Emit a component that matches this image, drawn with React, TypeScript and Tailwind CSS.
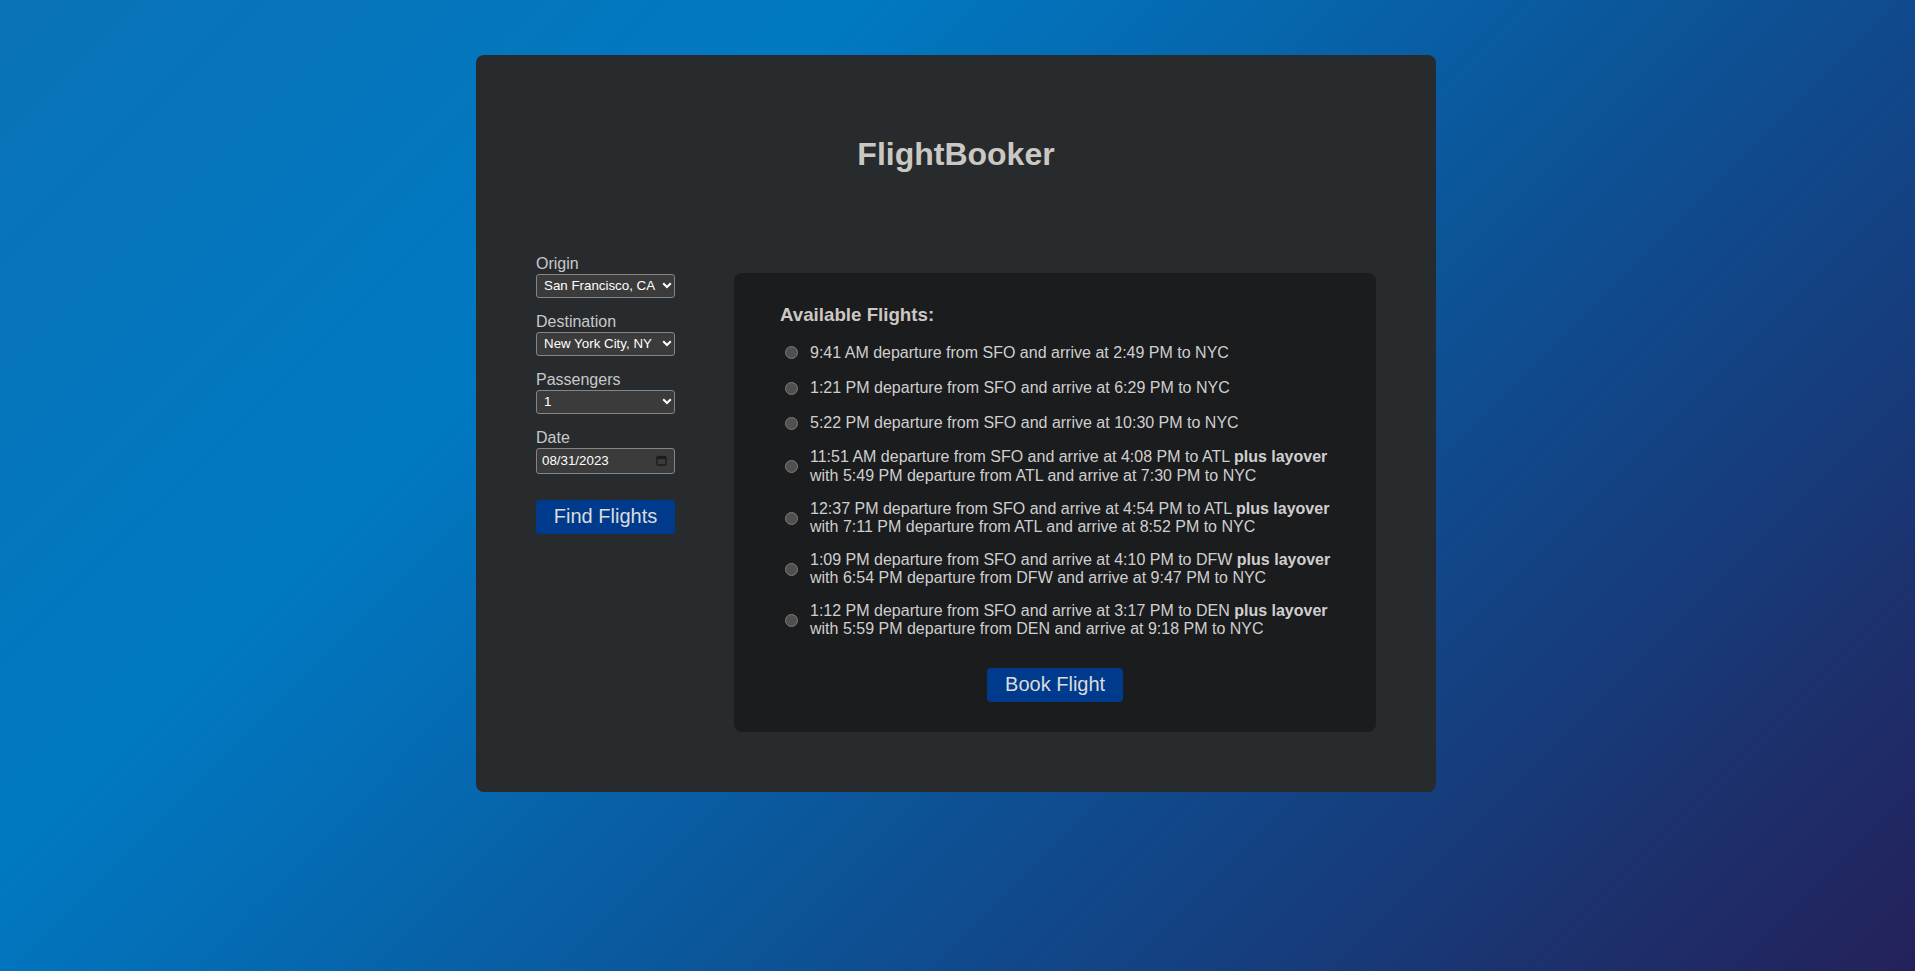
import React from 'react';

interface Flight {
  first: string;
  layover?: string;
}

const flights: Flight[] = [
  { first: '9:41 AM departure from SFO and arrive at 2:49 PM to NYC' },
  { first: '1:21 PM departure from SFO and arrive at 6:29 PM to NYC' },
  { first: '5:22 PM departure from SFO and arrive at 10:30 PM to NYC' },
  {
    first: '11:51 AM departure from SFO and arrive at 4:08 PM to ATL',
    layover: 'with 5:49 PM departure from ATL and arrive at 7:30 PM to NYC',
  },
  {
    first: '12:37 PM departure from SFO and arrive at 4:54 PM to ATL',
    layover: 'with 7:11 PM departure from ATL and arrive at 8:52 PM to NYC',
  },
  {
    first: '1:09 PM departure from SFO and arrive at 4:10 PM to DFW',
    layover: 'with 6:54 PM departure from DFW and arrive at 9:47 PM to NYC',
  },
  {
    first: '1:12 PM departure from SFO and arrive at 3:17 PM to DEN',
    layover: 'with 5:59 PM departure from DEN and arrive at 9:18 PM to NYC',
  },
];

function Chevron() {
  return (
    <svg width="10" height="7" viewBox="0 0 10 7" className="shrink-0">
      <path d="M1.2 1.2 L5 5 L8.8 1.2" fill="none" stroke="#ffffff" strokeWidth="2" />
    </svg>
  );
}

function FakeSelect({ value }: { value: string }) {
  return (
    <div className="flex h-[24px] w-[139px] items-center justify-between rounded-[3px] border border-[#858585] bg-[#3b3b3b] pl-[7px] pr-[2px] text-[13.33px] text-white">
      <span className="whitespace-nowrap">{value}</span>
      <Chevron />
    </div>
  );
}

function Field({ label, children, last }: { label: string; children: React.ReactNode; last?: boolean }) {
  return (
    <div className={last ? '' : 'mb-[15px]'}>
      <div className="h-[19px] leading-[18.4px] text-[16px]">{label}</div>
      {children}
    </div>
  );
}

export default function App() {
  return (
    <div className="min-h-screen w-full bg-[linear-gradient(135deg,#0a72b6_0%,#0079c2_30%,#0f4c8f_65%,#24215a_100%)] pt-[55px] pr-[3px] font-['Liberation_Sans',Arial,sans-serif] leading-[1.15] text-[#c8c8c8]">
      <div className="mx-auto w-[960px] rounded-lg bg-[#282b2d] px-[60px] pt-[81px] pb-[60px]">
        <h1 className="text-center text-[32px] font-bold leading-[36.8px] text-[#cbc8c4]">FlightBooker</h1>

        <div className="mt-[81px] flex items-start gap-[59px]">
          {/* search form */}
          <div className="mt-[1px] w-[139px] shrink-0">
            <Field label="Origin">
              <FakeSelect value="San Francisco, CA" />
            </Field>
            <Field label="Destination">
              <FakeSelect value="New York City, NY" />
            </Field>
            <Field label="Passengers">
              <FakeSelect value="1" />
            </Field>
            <Field label="Date" last>
              <div className="flex h-[26px] w-[139px] items-center justify-between rounded-[3px] border border-[#858585] bg-[#3b3b3b] pl-[5px] pr-[7px] text-[13.33px] text-white">
                <span>08/31/2023</span>
                <svg width="11" height="11" viewBox="0 0 11 11" className="shrink-0">
                  <rect x="1" y="1.5" width="9" height="8.5" rx="1.2" fill="none" stroke="#1c1c1c" strokeWidth="1.4" />
                  <rect x="1" y="1.5" width="9" height="2.6" fill="#1c1c1c" />
                </svg>
              </div>
            </Field>
            <button className="mt-[26px] h-[34px] w-full rounded-[4px] bg-[#003a8c] text-[20px] leading-[23px] text-[#dcdcdc]">
              Find Flights
            </button>
          </div>

          {/* results */}
          <div className="mt-[19px] flex-1 rounded-lg bg-[#1b1c1e] px-[46px] pt-[31px] pb-[30px]">
            <h3 className="text-[18.72px] font-bold leading-[21.5px] text-[#cbc8c4]">Available Flights:</h3>
            <div className="mt-[17px] flex flex-col gap-[14.4px]">
              {flights.map((f, i) => (
                <label key={i} className="flex items-center">
                  <span className="my-[4px] ml-[5px] mr-[12px] h-[13px] w-[13px] shrink-0 rounded-full border border-[#7c7c7c] bg-[#505050]" />
                  <span className="whitespace-nowrap text-[16px] leading-[18.4px] text-[#cfcfcf]">
                    {f.first}
                    {f.layover && (
                      <>
                        {' '}
                        <b>plus layover</b>
                        <br />
                        {f.layover}
                      </>
                    )}
                  </span>
                </label>
              ))}
            </div>
            <div className="mt-[28.7px] flex justify-center">
              <button className="h-[34px] rounded-[4px] bg-[#003a8c] px-[18px] text-[20px] leading-[23px] text-[#dcdcdc]">
                Book Flight
              </button>
            </div>
          </div>
        </div>
      </div>
    </div>
  );
}
